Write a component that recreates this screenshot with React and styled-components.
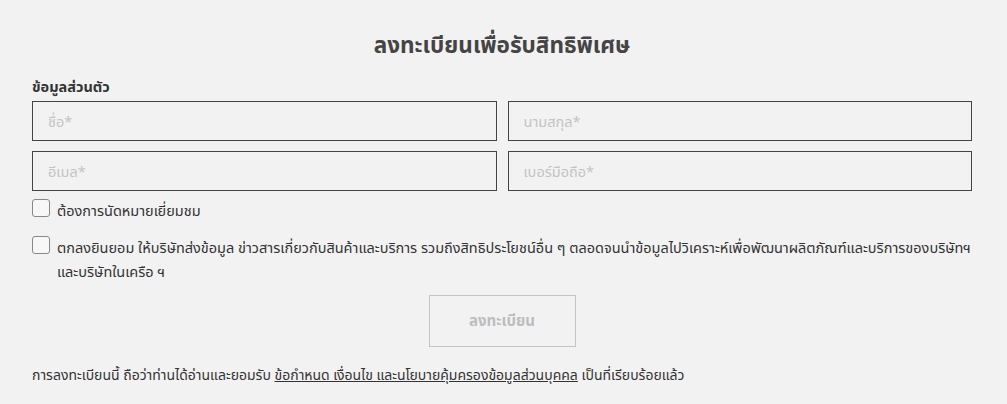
import React from 'react';
import styled, { createGlobalStyle } from 'styled-components';

const GlobalStyle = createGlobalStyle`
  html, body {
    margin: 0;
    padding: 0;
    background: #f2f2f2;
    font-family: "Noto Sans", "Noto Sans Thai", Tahoma, sans-serif;
    color: #333;
  }
`;

const Page = styled.div`
  width: 940px;
  margin: 0 0 0 32px;
  padding-top: 27px;
  box-sizing: border-box;
`;

const Title = styled.h2`
  margin: 0 0 13px;
  text-align: center;
  font-size: 22.5px;
  font-weight: 700;
  color: #444;
  line-height: 36px;
`;

const SectionLabel = styled.div`
  font-size: 14.5px;
  font-weight: 700;
  color: #333;
  line-height: 20px;
  margin-bottom: 5px;
`;

const FieldGrid = styled.div`
  display: grid;
  grid-template-columns: 1fr 1fr;
  column-gap: 11px;
  row-gap: 10px;
`;

const Input = styled.input`
  box-sizing: border-box;
  height: 40px;
  width: 100%;
  border: 1.5px solid #444;
  background: transparent;
  padding: 0 15px;
  font-family: inherit;
  font-size: 14.5px;
  color: #333;
  outline: none;
  &::placeholder {
    color: #c4c4c4;
  }
`;

const CheckRow = styled.label`
  display: flex;
  align-items: flex-start;
  gap: 7px;
  margin-top: ${(p) => p.$top}px;
  font-size: 14.5px;
  line-height: 24px;
  color: #333;
`;

const Box = styled.span`
  flex: none;
  box-sizing: border-box;
  width: 18px;
  height: 18px;
  margin-top: 1px;
  border: 1px solid #888;
  border-radius: 3px;
  background: #f7f7f7;
`;

const ButtonWrap = styled.div`
  display: flex;
  justify-content: center;
  margin-top: 12px;
`;

const SubmitButton = styled.button`
  width: 147px;
  height: 52px;
  border: 1.5px solid #c4c4c4;
  background: transparent;
  font-family: inherit;
  font-size: 15px;
  font-weight: 700;
  color: #bdbdbd;
`;

const Footer = styled.p`
  margin: 18px 0 0;
  font-size: 14px;
  line-height: 20px;
  color: #333;
`;

const Underline = styled.span`
  text-decoration: underline;
`;

export default function App() {
  return (
    <>
      <GlobalStyle />
      <Page>
        <Title>ลงทะเบียนเพื่อรับสิทธิพิเศษ</Title>
        <SectionLabel>ข้อมูลส่วนตัว</SectionLabel>
        <FieldGrid>
          <Input placeholder="ชื่อ*" />
          <Input placeholder="นามสกุล*" />
          <Input placeholder="อีเมล*" />
          <Input placeholder="เบอร์มือถือ*" />
        </FieldGrid>
        <CheckRow $top={7}>
          <Box />
          <span>ต้องการนัดหมายเยี่ยมชม</span>
        </CheckRow>
        <CheckRow $top={13}>
          <Box />
          <span>
            ตกลงยินยอม ให้บริษัทส่งข้อมูล ข่าวสารเกี่ยวกับสินค้าและบริการ รวมถึงสิทธิประโยชน์อื่น ๆ
            ตลอดจนนำข้อมูลไปวิเคราะห์เพื่อพัฒนาผลิตภัณฑ์และบริการของบริษัทฯ และบริษัทในเครือ ฯ
          </span>
        </CheckRow>
        <ButtonWrap>
          <SubmitButton>ลงทะเบียน</SubmitButton>
        </ButtonWrap>
        <Footer>
          การลงทะเบียนนี้ ถือว่าท่านได้อ่านและยอมรับ{' '}
          <Underline>ข้อกำหนด เงื่อนไข และนโยบายคุ้มครองข้อมูลส่วนบุคคล</Underline>{' '}
          เป็นที่เรียบร้อยแล้ว
        </Footer>
      </Page>
    </>
  );
}
